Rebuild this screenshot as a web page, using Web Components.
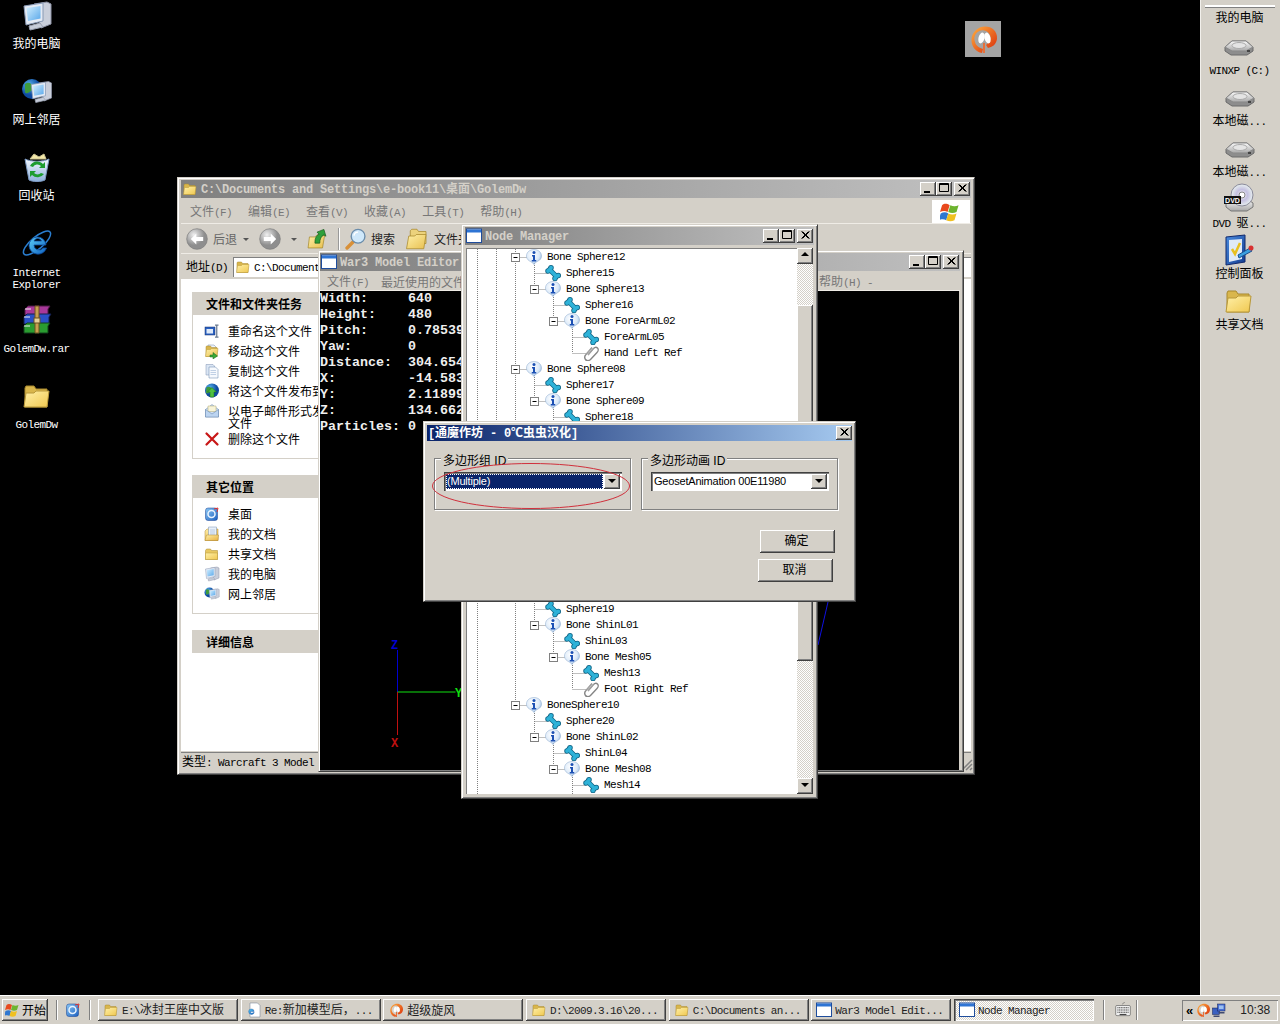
<!DOCTYPE html>
<html>
<head>
<meta charset="utf-8">
<title>Desktop</title>
<style>
html, body { margin: 0; background: #000; }
body { font: 12px/14px "Noto Sans CJK SC", "Liberation Sans", sans-serif; color: #000; overflow: hidden; }
</style>
</head>
<body>
<win-desktop>
  <desk-icons>
    <desk-icon icon="computer" label="我的电脑"></desk-icon>
    <desk-icon icon="network" label="网上邻居"></desk-icon>
    <desk-icon icon="recycle" label="回收站"></desk-icon>
    <desk-icon icon="ie" label="Internet|Explorer"></desk-icon>
    <desk-icon icon="rar" label="GolemDw.rar"></desk-icon>
    <desk-icon icon="folder" label="GolemDw"></desk-icon>
  </desk-icons>

  <desk-pin style="left:965px;top:21px"></desk-pin>

  <win-frame title="C:\Documents and Settings\e-book11\桌面\GolemDw" icon="folder" style="left:177px;top:177px;width:798px;height:598px">
    <menu-bar flag items="文件(F)|编辑(E)|查看(V)|收藏(A)|工具(T)|帮助(H)"></menu-bar>
    <ex-toolbar></ex-toolbar>
    <addr-bar value="C:\Documents and Settings"></addr-bar>
    <ex-sidebar>
      <task-box title="文件和文件夹任务" style="height:167px">
        <task-item icon="rename" label="重命名这个文件"></task-item>
        <task-item icon="move" label="移动这个文件"></task-item>
        <task-item icon="copy" label="复制这个文件"></task-item>
        <task-item icon="publish" label="将这个文件发布到"></task-item>
        <task-item icon="mail" label="以电子邮件形式发送|文件" tall></task-item>
        <task-item icon="del" label="删除这个文件"></task-item>
      </task-box>
      <task-box title="其它位置" style="height:139px">
        <task-item icon="desk" label="桌面"></task-item>
        <task-item icon="docs" label="我的文档"></task-item>
        <task-item icon="share" label="共享文档"></task-item>
        <task-item icon="computer" label="我的电脑"></task-item>
        <task-item icon="network" label="网上邻居"></task-item>
      </task-box>
      <task-box title="详细信息"></task-box>
    </ex-sidebar>
    <status-line text="类型: Warcraft 3 Model"></status-line>
  </win-frame>

  <win-frame thin title="War3 Model Editor" icon="win" style="left:318px;top:250px;width:646px;height:522px">
    <menu-bar style="height:19px;padding-left:7px;gap:12px" items="文件(F)|最近使用的文件|&gt;330|帮助(H) -"></menu-bar>
    <gl-view></gl-view>
  </win-frame>

  <win-frame title="Node Manager" icon="win" style="left:461px;top:224px;width:357px;height:575px">
    <node-tree>
      <tree-row lv="0" kind="bone" exp label="Bone Sphere12" pass="0,1"></tree-row>
      <tree-row lv="1" kind="mesh" label="Sphere15" pass="0,1,2"></tree-row>
      <tree-row lv="1" kind="bone" exp last label="Bone Sphere13" pass="0,1,2"></tree-row>
      <tree-row lv="2" kind="mesh" label="Sphere16" pass="0,1,2"></tree-row>
      <tree-row lv="2" kind="bone" exp last label="Bone ForeArmL02" pass="0,1,2"></tree-row>
      <tree-row lv="3" kind="mesh" label="ForeArmL05" pass="0,1,2"></tree-row>
      <tree-row lv="3" kind="att" last label="Hand Left Ref" pass="0,1,2"></tree-row>
      <tree-row lv="0" kind="bone" exp label="Bone Sphere08" pass="0,1"></tree-row>
      <tree-row lv="1" kind="mesh" label="Sphere17" pass="0,1,2"></tree-row>
      <tree-row lv="1" kind="bone" exp last label="Bone Sphere09" pass="0,1,2"></tree-row>
      <tree-row lv="2" kind="mesh" label="Sphere18" pass="0,1,2"></tree-row>
      <div style="height:176px"></div>
      <tree-row lv="1" kind="mesh" label="Sphere19" pass="0,2"></tree-row>
      <tree-row lv="1" kind="bone" exp last label="Bone ShinL01" pass="0,2"></tree-row>
      <tree-row lv="2" kind="mesh" label="ShinL03" pass="0,2"></tree-row>
      <tree-row lv="2" kind="bone" exp last label="Bone Mesh05" pass="0,2"></tree-row>
      <tree-row lv="3" kind="mesh" label="Mesh13" pass="0,2"></tree-row>
      <tree-row lv="3" kind="att" last label="Foot Right Ref" pass="0,2"></tree-row>
      <tree-row lv="0" kind="bone" exp last label="BoneSphere10" pass="0"></tree-row>
      <tree-row lv="1" kind="mesh" label="Sphere20" pass="0"></tree-row>
      <tree-row lv="1" kind="bone" exp last label="Bone ShinL02" pass="0"></tree-row>
      <tree-row lv="2" kind="mesh" label="ShinL04" pass="0"></tree-row>
      <tree-row lv="2" kind="bone" exp last label="Bone Mesh08" pass="0"></tree-row>
      <tree-row lv="3" kind="mesh" label="Mesh14" pass="0"></tree-row>
      <tree-row lv="3" kind="att" last label="" pass="0"></tree-row>
    </node-tree>
  </win-frame>

  <poly-dialog style="left:423px;top:421px;width:433px;height:181px"></poly-dialog>

  <desk-bar slot="bar">
    <bar-item icon="drive" label="WINXP (C:)"></bar-item>
    <bar-item icon="drive" label="本地磁..."></bar-item>
    <bar-item icon="drive" label="本地磁..."></bar-item>
    <bar-item icon="dvd" label="DVD 驱..."></bar-item>
    <bar-item icon="panel" label="控制面板"></bar-item>
    <bar-item icon="folder" label="共享文档"></bar-item>
  </desk-bar>

  <task-bar slot="task">
    <task-btn icon="folder" label="E:\冰封王座中文版"></task-btn>
    <task-btn icon="iedoc" label="Re:新加模型后，..."></task-btn>
    <task-btn icon="whirl" label="超级旋风"></task-btn>
    <task-btn icon="folder" label="D:\2009.3.16\20..."></task-btn>
    <task-btn icon="folder" label="C:\Documents an..."></task-btn>
    <task-btn icon="win" label="War3 Model Edit..."></task-btn>
    <task-btn icon="win" label="Node Manager" active></task-btn>
  </task-bar>
</win-desktop>

<script>
// icon artwork, all drawn on a 32 unit box
const G = (id, a, b, x2 = 0, y2 = 1) => `<linearGradient id="${id}" x1="0" y1="0" x2="${x2}" y2="${y2}"><stop offset="0" stop-color="${a}"/><stop offset="1" stop-color="${b}"/></linearGradient>`;
const monitor = `<path d="M13 4l13-2 4 2v20l-10 4z" fill="#c9ceda" stroke="#8d93a6"/><path d="M3 6l19-3v18L5 25z" fill="#e4eaf4" stroke="#8899b4"/><path d="M5.500 8l14-2v12.500L7 21z" fill="url(#scr)"/><path d="M8 26l11-3 3 4-13 3z" fill="#c6ccd8" stroke="#9aa1b2"/>`;
const folderArt = `<path d="M4 27V8l1-2h8l2 3h11v18z" fill="#d9b64c" stroke="#a8882c"/><path d="M3 27l2-14h8l2-2h13l-2 16z" fill="url(#fo)" stroke="#b8983a"/>`;
const IC = {
  computer: `<defs>${G('scr', '#d2efff', '#5aa8ea', 1, 1)}</defs>${monitor}`,
  network: `<defs>${G('scr', '#d2efff', '#5aa8ea', 1, 1)}<radialGradient id="gl" cx=".35" cy=".3"><stop offset="0" stop-color="#58b4f0"/><stop offset="1" stop-color="#0e4aa0"/></radialGradient></defs><circle cx="11" cy="13" r="10" fill="url(#gl)"/><path d="M4 8c4-3 6 0 8 1s0 5-2 6-5 4-6 1z" fill="#3f9b3c"/><g transform="translate(8 4) scale(.75)">${monitor}</g>`,
  recycle: `<defs>${G('bn', '#f2f7ff', '#8fb2dc')}</defs><path d="M9 7l4-5 5 3 5-3 2 5z" fill="#f4e8a8" stroke="#c9c090"/><path d="M4 7c6 3 18 3 24 0l-4 21c-4 2-12 2-16 0z" fill="url(#bn)" stroke="#7d9ac2"/><path d="M12 15a5 5 0 0 1 8-1l-2 2h6v-6l-2 2a8 8 0 0 0-13 2zM20 21a5 5 0 0 1-7 0l2-2H9v6l2-2a8 8 0 0 0 12-1z" fill="#1d9d30"/>`,
  ie: `<defs>${G('ie', '#5ed0f8', '#0c5ec0', 1, 1)}</defs><ellipse cx="16" cy="15" rx="17" ry="6" transform="rotate(-40 16 15)" fill="none" stroke="#2a7ed0" stroke-width="1.500"/><path d="M8 18a8.500 8.500 0 1 1 17-1H13a5 5 0 0 0 9 3h3.500a9 9 0 0 1-17.500-2zM13 13h7.500a4 4 0 0 0-7.500 0z" fill="url(#ie)" stroke="#0c4a9c" stroke-width=".8"/>`,
  rar: `<path d="M4 5l3-3h22l-2 3v6H4z" fill="#a8389a" stroke="#4a1a44"/><path d="M3 13l3-3h24l-2 3v7H3z" fill="#2a50c8" stroke="#14204e"/><path d="M3 22l3-3h23l-2 3v7H3z" fill="#2a9c30" stroke="#10401a"/><path d="M4 5h6M3 13h6M3 22h6" stroke="#eee"/><path d="M14 2h4v27h-4z" fill="#c8a050" stroke="#6a5020"/><rect x="13" y="14" width="6" height="5" fill="#e4d098" stroke="#6a5020"/>`,
  folder: `<defs>${G('fo', '#fff0a8', '#f0c850', 1, 1)}</defs>${folderArt}`,
  drive: `<defs>${G('dr', '#fafafa', '#a8a8a8', 0, 1)}</defs><path d="M2 17l7-6h14l7 6v4l-6 4H8l-6-4z" fill="#8d8d8d" stroke="#6a6a6a"/><path d="M2 17l7-6h14l7 6-7 4H9z" fill="url(#dr)" stroke="#8a8a8a"/><ellipse cx="16" cy="15.500" rx="7" ry="3" fill="#e4e4e4" stroke="#aaa"/><rect x="24" y="20" width="3" height="2" fill="#444"/>`,
  dvd: `<defs>${G('dr', '#fafafa', '#a8a8a8', 0, 1)}<radialGradient id="cd"><stop offset="0" stop-color="#fff"/><stop offset=".5" stop-color="#c4c0e0"/><stop offset="1" stop-color="#e8f0f0"/></radialGradient></defs><path d="M3 20l6-4h15l6 4v4l-6 4H8l-5-4z" fill="url(#dr)" stroke="#777"/><circle cx="19" cy="12" r="11" fill="url(#cd)" stroke="#8a8a9a"/><circle cx="19" cy="12" r="3" fill="#fff" stroke="#888"/><rect x="1" y="13" width="17" height="8" fill="#111"/><text x="9.500" y="19.500" font-size="7" font-weight="700" font-family="Liberation Sans" fill="#fff" text-anchor="middle">DVD</text>`,
  panel: `<defs>${G('pn', '#4a8ce0', '#123c90', 1, 1)}</defs><path d="M3 3l19-2v27L3 31z" fill="url(#pn)" stroke="#10286c"/><path d="M6 6l13-1v20L6 28z" fill="#dfeaf8"/><path d="M9 15l3 5 5-11" fill="none" stroke="#e8c020" stroke-width="2.500"/><path d="M15 21l12-7 2 3-13 7z" fill="#3aa0e0" stroke="#1a5090"/><circle cx="28" cy="14" r="2.500" fill="#d83030"/>`,
  rename: `<rect x="2" y="8" width="20" height="16" fill="#2a60c0" stroke="#143070"/><rect x="5" y="12" width="13" height="9" fill="#dfeaf8"/><path d="M22 4h7M25.500 4v24M22 28h7" stroke="#6a7a90" stroke-width="2.500" fill="none"/>`,
  move: `<defs>${G('fo', '#fff0a8', '#e8c050', 1, 1)}</defs><path d="M8 4h12l4 4v10H8z" fill="#eef4fc" stroke="#7088a8"/>${folderArt}<path d="M12 24h6v-5l9 7-9 6v-4h-6z" fill="#38a838" stroke="#1a6a1a"/>`,
  copy: `<path d="M4 3h14l3 3v18H4z" fill="#dbe6f4" stroke="#7c90b0"/><path d="M10 8h13l5 5v17H10z" fill="#f6f9fd" stroke="#6080a8"/><path d="M13 15h11M13 19h11M13 23h11" stroke="#8aa6cc"/>`,
  publish: `<defs><radialGradient id="gl" cx=".35" cy=".3"><stop offset="0" stop-color="#58b4f0"/><stop offset="1" stop-color="#0e4aa0"/></radialGradient></defs><circle cx="16" cy="15" r="14" fill="url(#gl)"/><path d="M5 9c5-4 8 0 11 1s0 7-3 8-8 5-9 1z" fill="#3f9b3c"/><path d="M16 9l9 9h-5v10h-8V18H7z" fill="#4ec040" stroke="#1a6a1a"/>`,
  mail: `<path d="M3 13L16 3l13 10v15H3z" fill="#cfe0f4" stroke="#6080a8"/><path d="M8 6h16v11H8z" fill="#f8f4d8" stroke="#b0a870"/><path d="M3 13l13 9 13-9v15H3z" fill="#bcd4f0" stroke="#6080a8"/>`,
  del: `<path d="M5 5l22 22M27 5L5 27" stroke="#c81818" stroke-width="4.500" stroke-linecap="round"/>`,
  desk: `<defs>${G('pn', '#8cc8f4', '#1c60c0', 1, 1)}</defs><rect x="3" y="4" width="24" height="25" rx="5" fill="url(#pn)" stroke="#123c90"/><circle cx="15" cy="16" r="7" fill="none" stroke="#eaf4ff" stroke-width="3"/><path d="M20 6l8-2-2 8" fill="none" stroke="#d83030" stroke-width="2"/>`,
  docs: `<defs>${G('fo', '#fff0a8', '#e8b040', 1, 1)}</defs><path d="M2 29V10l4-4h22v23z" fill="url(#fo)" stroke="#b08830"/><path d="M9 2h16v20H9z" fill="#e8f0fa" stroke="#7890b0"/><path d="M12 8h10M12 12h10M12 16h10" stroke="#8aa6cc"/><path d="M2 29l3-11h24l-1 11z" fill="url(#fo)" stroke="#b08830"/>`,
  share: `<defs>${G('fo', '#fff0a8', '#f0c850', 1, 1)}</defs><path d="M3 27V9l2-3h8l2 3h12v18z" fill="#e8c860" stroke="#a8882c"/><path d="M3 27V14h24v13z" fill="url(#fo)" stroke="#b8983a"/>`,
  win: `<rect x="1" y="2" width="30" height="27" fill="#fff" stroke="#1e4c9c" stroke-width="2"/><rect x="2" y="3" width="28" height="6" fill="#2e74d4"/>`,
  iedoc: `<defs>${G('ie', '#5ed0f8', '#0c5ec0', 1, 1)}</defs><path d="M8 2h15l5 5v23H8z" fill="#fff" stroke="#6a7a90"/><g transform="translate(0 8) scale(.65)"><path d="M8 18a8.500 8.500 0 1 1 17-1H13a5 5 0 0 0 9 3h3.500a9 9 0 0 1-17.500-2z" fill="url(#ie)" stroke="#0c4a9c"/></g>`,
  whirl: `<defs>${G('wh', '#ffb040', '#d82808', 1, 1)}</defs><path d="M15 30C4 28 1 14 9 7s22-3 21 9c-1 6-5 8-9 9l-2-3c6-4 6-11 0-14S5 11 8 19c1 4 5 6 8 7z" fill="url(#wh)"/><ellipse cx="14.500" cy="15" rx="3" ry="5.500" transform="rotate(15 14.500 15)" fill="#fff"/><ellipse cx="20.500" cy="15" rx="3" ry="5.500" transform="rotate(-15 20.500 15)" fill="#fff"/><path d="M17 20v10" stroke="#e8703a" stroke-width="2"/>`,
  bone: `<defs><radialGradient id="inf" cx=".4" cy=".35" r=".75"><stop offset="0" stop-color="#fff"/><stop offset=".6" stop-color="#dbe9f8"/><stop offset="1" stop-color="#7ea8d8"/></radialGradient></defs><path d="M16 31c-2-4-6-5-9-7C2 21 1 17 1 14 1 6 8 1 16 1s15 5 15 13c0 4-2 8-7 10-3 2-6 3-8 7z" fill="url(#inf)" stroke="#8aa8cc"/><circle cx="16" cy="7" r="3" fill="#1c50b4"/><path d="M12 12h6v10h2.500v3h-9v-3H14v-7h-2z" fill="#1c50b4"/>`,
  mesh: `<path d="M9 9l14 14" stroke="#0f6384" stroke-width="10" stroke-linecap="round"/><g fill="#0f6384"><circle cx="6" cy="12" r="5.500"/><circle cx="12" cy="5.500" r="5.500"/><circle cx="20" cy="27" r="5.500"/><circle cx="26.500" cy="21" r="5.500"/></g><path d="M9 9l14 14" stroke="#2eb2d8" stroke-width="7" stroke-linecap="round"/><g fill="#2eb2d8"><circle cx="6" cy="12" r="3.800"/><circle cx="12" cy="5.500" r="3.800"/><circle cx="20" cy="27" r="3.800"/><circle cx="26.500" cy="21" r="3.800"/></g>`,
  att: `<path d="M10 20L21 7c3-3 6-3 8-1s2 6-1 9L15 29c-3 3-8 3-10 0s-2-7 1-10L18 5" fill="none" stroke="#858585" stroke-width="2.800"/><path d="M10 20L21 7M6 19L18 5" stroke="#d8d8d8" stroke-width=".8"/>`,
  flag: `<path d="M3 6c4-3 7-2 11 0l-3 10c-3-2-7-2-11 0z" fill="#e8491d"/><path d="M15 6c4 2 8 2 12 0l-3 10c-4 2-8 2-12 0z" fill="#6db42f"/><path d="M0 18c4-2 8-2 11 0l-3 10c-3-2-7-2-11 0z" fill="#2f77d0" transform="translate(1 0)"/><path d="M12 18c4 2 8 2 12 0l-3 10c-4 2-8 2-12 0z" fill="#f0c020"/>`,
  back: `<defs><radialGradient id="ci" cx=".35" cy=".3"><stop offset="0" stop-color="#f0f0f0"/><stop offset="1" stop-color="#8e8e8e"/></radialGradient></defs><circle cx="16" cy="16" r="15" fill="url(#ci)" stroke="#7d7d7d"/><path d="M7 16l8-8v5h10v6H15v5z" fill="#fff"/>`,
  fwd: `<defs><radialGradient id="ci" cx=".35" cy=".3"><stop offset="0" stop-color="#f0f0f0"/><stop offset="1" stop-color="#8e8e8e"/></radialGradient></defs><circle cx="16" cy="16" r="15" fill="url(#ci)" stroke="#7d7d7d"/><path d="M25 16l-8-8v5H7v6h10v5z" fill="#fff"/>`,
  up: `<defs>${G('fo', '#fff0a8', '#e8c050', 1, 1)}</defs><path d="M3 29l2-16h8l3-3 11 1-3 18z" fill="url(#fo)" stroke="#a08428"/><path d="M13 22c0-8 2-11 6-13l-3-3 10-4 3 10-3-2c-4 2-6 6-6 12z" fill="#2fa03a" stroke="#145a1c"/>`,
  search: `<path d="M12 20L3 29" stroke="#d89038" stroke-width="5" stroke-linecap="round"/><circle cx="19" cy="12" r="10" fill="#cfe8fa" stroke="#6a8caa" stroke-width="2"/><path d="M13 11a6 6 0 0 1 6-5" stroke="#fff" stroke-width="2" fill="none"/>`,
  folders: `<defs>${G('fo', '#fff0a8', '#e8c050', 1, 1)}</defs><path d="M7 22V5l2-2h7l2 3h10v16z" fill="#ecd27c" stroke="#a8882c"/><path d="M2 29l3-17h8l2-2h13l-3 19z" fill="url(#fo)" stroke="#a8882c"/>`,
  kbd: `<path d="M15 6c0-3 4-2 4-4" stroke="#555" fill="none"/><rect x="3" y="8" width="26" height="18" rx="2" fill="#f0f0f0" stroke="#444"/><path d="M6 12h20M6 16h20M6 20h20" stroke="#444" stroke-width="2" stroke-dasharray="2 1"/><rect x="10" y="23" width="12" height="2" fill="#444"/>`,
  tray: `<rect x="3" y="12" width="14" height="13" fill="#3a60c0" stroke="#101e54"/><rect x="13" y="4" width="15" height="14" fill="#4a70d4" stroke="#101e54"/><rect x="16" y="7" width="9" height="7" fill="#9cc0f0"/><path d="M5 27h12v3H5zM15 20h12v3H15z" fill="#404a70"/>`
};

// latin runs are bitmap-font narrow next to the cjk ones
const esc = s => s.replace(/&/g, '&amp;').replace(/</g, '&lt;');
const mix = s => s.split(/([\u2E80-\uFFEF\u2103]+)/).filter(Boolean).map(p =>
  /[\u2E80-\uFFEF\u2103]/.test(p) ? `<span class="c">${esc(p)}</span>` : `<span class="l">${esc(p)}</span>`).join('');

class XT extends HTMLElement {
  connectedCallback() {
    if (this.shadowRoot) return;
    this.attachShadow({ mode: 'open' });
    const lines = (this.getAttribute('t') || '').split('|').map(mix).join('<br>');
    // no whitespace round the runs: the host is white-space: pre
    this.shadowRoot.innerHTML = `<style>
        :host { display: inline; white-space: pre; }
        .c { font-family: "Noto Sans CJK SC", sans-serif; font-size: var(--cjk-size, 12px); }
        .l { font-family: var(--lat-font, "Liberation Mono"), monospace; font-size: var(--lat-size, 11px); letter-spacing: var(--lat-ls, -0.6px); }
      </style>${lines}`;
  }
}
customElements.define('x-t', XT);

class XIcon extends HTMLElement {
  connectedCallback() {
    if (this.shadowRoot) return;
    this.attachShadow({ mode: 'open' });
    const s = this.getAttribute('size') || 16;
    this.shadowRoot.innerHTML = `
      <style>:host { display: block; flex: none; width: ${s}px; height: ${s}px; } svg { display: block; }</style>
      <svg width="${s}" height="${s}" viewBox="0 0 32 32">${IC[this.getAttribute('name')] || ''}</svg>`;
  }
}
customElements.define('x-icon', XIcon);

class WinDesktop extends HTMLElement {
  connectedCallback() {
    this.attachShadow({ mode: 'open' });
    this.shadowRoot.innerHTML = `
      <style>
        :host { display: flex; flex-direction: column; width: 1280px; height: 1024px; background: #000; overflow: hidden; }
        .main { flex: 1; min-height: 0; position: relative; display: flex; justify-content: space-between; }
      </style>
      <div class="main"><slot></slot><slot name="bar"></slot></div>
      <slot name="task"></slot>`;
  }
}
customElements.define('win-desktop', WinDesktop);

class DeskIcons extends HTMLElement {
  connectedCallback() {
    this.attachShadow({ mode: 'open' });
    this.shadowRoot.innerHTML = `
      <style>:host { display: flex; flex-direction: column; width: 73px; }</style><slot></slot>`;
  }
}
customElements.define('desk-icons', DeskIcons);

class DeskIcon extends HTMLElement {
  connectedCallback() {
    this.attachShadow({ mode: 'open' });
    const label = this.getAttribute('label');
    const latin = /^[\x00-\x7f]+$/.test(label);
    this.shadowRoot.innerHTML = `
      <style>
        :host { display: flex; flex-direction: column; align-items: center; height: 76px; color: #fff; text-align: center; font-family: "Liberation Mono", monospace; line-height: 12px; }
        x-icon { margin-bottom: ${latin ? 7 : 5}px; }
      </style>
      <x-icon name="${this.getAttribute('icon')}" size="32"></x-icon>
      <div><x-t t="${label}"></x-t></div>`;
  }
}
customElements.define('desk-icon', DeskIcon);

class DeskPin extends HTMLElement {
  connectedCallback() {
    this.attachShadow({ mode: 'open' });
    this.shadowRoot.innerHTML = `
      <style>
        :host { position: absolute; width: 36px; height: 36px; background: #a4a4a4; display: flex; align-items: center; justify-content: center; }
      </style>
      <x-icon name="whirl" size="32"></x-icon>`;
  }
}
customElements.define('desk-pin', DeskPin);

class WinFrame extends HTMLElement {
  connectedCallback() {
    this.attachShadow({ mode: 'open' });
    const thin = this.hasAttribute('thin');
    this.shadowRoot.innerHTML = `
      <style>
        :host { position: absolute; box-sizing: border-box; display: flex; flex-direction: column; background: #d4d0c8;
          border: 1px solid; border-color: #d4d0c8 #404040 #404040 #d4d0c8;
          box-shadow: inset 1px 1px #fff, inset -1px -1px #808080;
          padding: 2px 3px ${thin ? 1 : 3}px ${thin ? 1 : 3}px; }
        .bar { flex: none; height: 18px; margin-bottom: 1px; display: flex; align-items: center; gap: 2px; padding: 0 0 0 1px;
          background: linear-gradient(90deg, #808080, #c0c0c0); color: #d4d0c8; line-height: 14px;
          --lat-size: 12px; --lat-ls: -0.2px; font-weight: 700; overflow: hidden; white-space: nowrap; }
        .txt { flex: 1; margin-left: 1px; }
        .btns { display: flex; flex: none; margin-right: 1px; }
        .content { flex: 1; min-height: 0; display: flex; flex-direction: column; }
        win-btn[x] { margin-left: 2px; }
      </style>
      <div class="bar">
        <x-icon name="${this.getAttribute('icon')}" size="16"></x-icon>
        <div class="txt"><x-t t="${this.getAttribute('title')}"></x-t></div>
        <div class="btns"><win-btn g="min"></win-btn><win-btn g="max"></win-btn><win-btn g="x" x></win-btn></div>
      </div>
      <div class="content"><slot></slot></div>`;
    this.removeAttribute('title');
  }
}
customElements.define('win-frame', WinFrame);

const GLYPH = {
  min: '<path d="M3 9h6v2H3z" fill="#000"/>',
  max: '<path d="M2.500 1.500h9v8h-9zM2 2.500h10" fill="none" stroke="#000"/>',
  x: '<path d="M3.500 2.500l7 7M4.500 2.500l7 7M10.500 2.500l-7 7M11.500 2.500l-7 7" stroke="#000"/>',
  up: '<path d="M7 4l4 4H3z" fill="#000"/>',
  down: '<path d="M3 5h8L7 9z" fill="#000"/>'
};
class WinBtn extends HTMLElement {
  connectedCallback() {
    this.attachShadow({ mode: 'open' });
    this.shadowRoot.innerHTML = `
      <style>
        :host { display: block; flex: none; box-sizing: border-box; width: var(--bw, 16px); height: var(--bh, 14px); background: #d4d0c8;
          box-shadow: inset -1px -1px #404040, inset 1px 1px #fff, inset -2px -2px #808080; }
        svg { display: block; margin: 0 auto; }
      </style>
      <svg width="14" height="14" viewBox="0 0 14 14">${GLYPH[this.getAttribute('g')]}</svg>`;
  }
}
customElements.define('win-btn', WinBtn);

class MenuBar extends HTMLElement {
  connectedCallback() {
    this.attachShadow({ mode: 'open' });
    const items = this.getAttribute('items').split('|').map(t =>
      t[0] === '>' ? `<span style="width:${t.slice(1)}px"></span>` : `<span><x-t t="${t}"></x-t></span>`).join('');
    this.shadowRoot.innerHTML = `
      <style>
        :host { display: flex; flex: none; height: 25px; align-items: center; gap: 16px; padding-left: 9px; color: #777; position: relative;
          box-shadow: inset 0 -1px #efece6; }
        .flag { margin-left: auto; align-self: stretch; width: 38px; margin: 1px 1px 1px auto; background: #fff; display: flex; align-items: center; justify-content: center; }
      </style>
      ${items}
      ${this.hasAttribute('flag') ? '<div class="flag"><x-icon name="flag" size="22"></x-icon></div>' : ''}`;
  }
}
customElements.define('menu-bar', MenuBar);

class ExToolbar extends HTMLElement {
  connectedCallback() {
    this.attachShadow({ mode: 'open' });
    this.shadowRoot.innerHTML = `
      <style>
        :host { display: flex; flex: none; height: 30px; align-items: center; padding-left: 5px; color: #222; box-shadow: inset 0 -1px #efece6; }
        .g { color: #666; margin: 0 6px 0 5px; }
        .tri { width: 0; height: 0; border: 3px solid transparent; border-top: 3px solid #555; border-bottom: 0; margin: 0 10px 0 0; }
        .sep { width: 1px; height: 22px; background: #999; box-shadow: 1px 0 #fff; margin: 0 6px 0 10px; }
      </style>
      <x-icon name="back" size="22"></x-icon><span class="g"><x-t t="后退"></x-t></span><i class="tri"></i>
      <x-icon name="fwd" size="22"></x-icon><i class="tri" style="margin-left:10px;margin-right:9px"></i>
      <x-icon name="up" size="22"></x-icon><i class="sep"></i>
      <x-icon name="search" size="22"></x-icon><span style="margin:0 10px 0 4px"><x-t t="搜索"></x-t></span>
      <x-icon name="folders" size="24"></x-icon><span style="margin-left:5px"><x-t t="文件夹"></x-t></span>`;
  }
}
customElements.define('ex-toolbar', ExToolbar);

class AddrBar extends HTMLElement {
  connectedCallback() {
    this.attachShadow({ mode: 'open' });
    this.shadowRoot.innerHTML = `
      <style>
        :host { display: flex; flex: none; height: 25px; align-items: center; padding-left: 5px; }
        .f { flex: 1; height: 20px; margin-left: 5px; background: #fff; box-shadow: inset 1px 1px #808080; display: flex; align-items: center; gap: 3px; padding-left: 2px; white-space: nowrap; overflow: hidden; }
      </style>
      <span><x-t t="地址(D)"></x-t></span>
      <div class="f"><x-icon name="folder" size="16"></x-icon><x-t t="${this.getAttribute('value')}"></x-t></div>`;
  }
}
customElements.define('addr-bar', AddrBar);

class ExSidebar extends HTMLElement {
  connectedCallback() {
    this.attachShadow({ mode: 'open' });
    this.shadowRoot.innerHTML = `
      <style>:host { flex: 1; min-height: 0; display: flex; flex-direction: column; gap: 16px; background: #fff; padding: 13px 0 0 11px; overflow: hidden; }</style>
      <slot></slot>`;
  }
}
customElements.define('ex-sidebar', ExSidebar);

class TaskBox extends HTMLElement {
  connectedCallback() {
    this.attachShadow({ mode: 'open' });
    const t = this.getAttribute('title');
    this.removeAttribute('title');
    this.shadowRoot.innerHTML = `
      <style>
        :host { display: block; flex: none; width: 190px; box-sizing: border-box; }
        .h { height: 23px; background: #d4d0c8; display: flex; align-items: center; padding-left: 14px; font-weight: 700; }
        .b { box-sizing: border-box; height: calc(100% - 23px); padding: 8px 0 0 11px; border: 1px solid #d4d0c8; border-top: 0; display: flex; flex-direction: column; }
      </style>
      <div class="h"><x-t t="${t}"></x-t></div>
      ${this.children.length ? '<div class="b"><slot></slot></div>' : ''}`;
  }
}
customElements.define('task-box', TaskBox);

class TaskItem extends HTMLElement {
  connectedCallback() {
    this.attachShadow({ mode: 'open' });
    const tall = this.hasAttribute('tall');
    this.shadowRoot.innerHTML = `
      <style>
        :host { display: flex; flex: none; height: ${tall ? 28 : 20}px; align-items: flex-start; gap: 8px; line-height: 12px; white-space: nowrap; }
        div { padding-top: 2px; }
      </style>
      <x-icon name="${this.getAttribute('icon')}" size="16"></x-icon>
      <div><x-t t="${this.getAttribute('label')}"></x-t></div>`;
  }
}
customElements.define('task-item', TaskItem);

class StatusLine extends HTMLElement {
  connectedCallback() {
    this.attachShadow({ mode: 'open' });
    this.shadowRoot.innerHTML = `
      <style>
        :host { display: flex; flex: none; height: 19px; align-items: center; padding-left: 1px; margin-top: 1px; box-shadow: inset 0 1px #808080; position: relative; }
        .grip { position: absolute; right: -2px; bottom: 0; }
      </style>
      <x-t t="${this.getAttribute('text')}"></x-t>
      <svg class="grip" width="12" height="12" viewBox="0 0 12 12"><path d="M11 1L1 11M11 5l-6 6M11 9l-2 2" stroke="#808080" stroke-width="1.500"/></svg>`;
  }
}
customElements.define('status-line', StatusLine);

class GlView extends HTMLElement {
  connectedCallback() {
    this.attachShadow({ mode: 'open' });
    const stats = [['Width:', '640'], ['Height:', '480'], ['Pitch:', '0.78539'], ['Yaw:', '0'], ['Distance:', '304.654'],
      ['X:', '-14.583'], ['Y:', '2.11899'], ['Z:', '134.662'], ['Particles:', '0']];
    this.shadowRoot.innerHTML = `
      <style>
        :host { flex: 1; min-height: 0; display: block; position: relative; background: #000; overflow: hidden; margin-right: 1px; }
        .stats { color: #efefef; font: 700 13.330px/16px "Liberation Mono", monospace; display: grid; grid-template-columns: 88px auto; justify-content: start; }
        svg { position: absolute; left: 0; top: 0; }
        text { font: 700 12px "Liberation Mono", monospace; }
      </style>
      <div class="stats">${stats.map(r => `<span>${r[0]}</span><span>${r[1]}</span>`).join('')}</div>
      <svg width="640" height="480" viewBox="320 291 640 480">
        <path d="M397.500 650v42" stroke="#0000d0"/><path d="M397.500 692h58" stroke="#10e010"/><path d="M397.500 692v43" stroke="#c01010"/>
        <path d="M828 602l-10 43" stroke="#1010e0"/>
        <text x="391" y="649" fill="#0000d0">Z</text><text x="455" y="697" fill="#10e010">Y</text><text x="391" y="747" fill="#c01010">X</text>
      </svg>`;
  }
}
customElements.define('gl-view', GlView);

class NodeTree extends HTMLElement {
  connectedCallback() {
    this.attachShadow({ mode: 'open' });
    this.shadowRoot.innerHTML = `
      <style>
        :host { flex: 1; min-height: 0; display: flex; background: #fff; margin: 2px 1px 1px 1px; overflow: hidden; box-shadow: inset 1px 1px #808080; }
        .rows { flex: 1; min-width: 0; padding-top: 1px; overflow: hidden; }
        .sb { flex: none; width: 16px; display: flex; flex-direction: column;
          background: repeating-conic-gradient(#d4d0c8 0 25%, #fff 0 50%) 0 0 / 2px 2px; }
        .th { background: #d4d0c8; box-shadow: inset -1px -1px #404040, inset 1px 1px #fff, inset -2px -2px #808080; height: 356px; margin: 41px 0 auto; }
        win-btn { --bh: 16px; }
      </style>
      <div class="rows"><slot></slot></div>
      <div class="sb"><win-btn g="up"></win-btn><div class="th"></div><win-btn g="down"></win-btn></div>`;
  }
}
customElements.define('node-tree', NodeTree);

const col = n => 11 + 19 * n + .5;
class TreeRow extends HTMLElement {
  connectedCallback() {
    this.attachShadow({ mode: 'open' });
    const lv = +this.getAttribute('lv');
    const own = 2 + lv;
    const x = col(own), ix = col(own + 1);
    const exp = this.hasAttribute('exp'), last = this.hasAttribute('last');
    const dots = 'stroke="#808080" stroke-dasharray="1 1"';
    let art = (this.getAttribute('pass') || '').split(',').filter(p => p !== '' && +p < own)
      .map(p => `<path d="M${col(+p)} 0v16" ${dots}/>`).join('');
    art += `<path d="M${x} 0v${last ? 8 : 16}" ${dots}/><path d="M${x} 8.500H${ix - 6}" ${dots}/>`;
    if (exp) {
      art += `<path d="M${ix} 8v8" ${dots}/>`;
      art += `<rect x="${x - 4}" y="4.500" width="8" height="8" fill="#fff" stroke="#808080"/><path d="M${x - 2} 8.500h4" stroke="#000"/>`;
    }
    const name = this.getAttribute('kind');
    art += `<g transform="translate(${ix - 8.5} 0) scale(.5)">${IC[name]}</g>`;
    const w = 81 + 19 * lv;
    this.shadowRoot.innerHTML = `
      <style>
        :host { display: flex; height: 16px; align-items: center; white-space: nowrap; }
        svg { display: block; flex: none; }
        span { font: 11px/16px "Liberation Mono", monospace; letter-spacing: -0.6px; }
      </style>
      <svg width="${w}" height="16" viewBox="0 0 ${w} 16">${art}</svg>
      <span>${esc(this.getAttribute('label'))}</span>`;
  }
}
customElements.define('tree-row', TreeRow);

class GroupBox extends HTMLElement {
  connectedCallback() {
    this.attachShadow({ mode: 'open' });
    this.shadowRoot.innerHTML = `
      <style>
        :host { display: block; position: relative; box-sizing: border-box; width: 197px; height: 52px; border: 1px solid #808080; box-shadow: inset 1px 1px #fff, 1px 1px #fff;
          padding: 13px 8px 0 9px; --lat-font: "Liberation Sans"; --lat-size: 12px; --lat-ls: 0; }
        .lg { position: absolute; left: 6px; top: -6px; background: #d4d0c8; padding: 0 2px; line-height: 13px; white-space: nowrap; }
      </style>
      <div class="lg"><x-t t="${this.getAttribute('label')}"></x-t></div>
      <slot></slot>`;
  }
}
customElements.define('group-box', GroupBox);

class ComboBox extends HTMLElement {
  connectedCallback() {
    this.attachShadow({ mode: 'open' });
    const sel = this.hasAttribute('selected');
    this.shadowRoot.innerHTML = `
      <style>
        :host { display: flex; align-items: center; box-sizing: border-box; height: 19px; width: 178px; background: #fff; padding: 2px;
          box-shadow: inset 1px 1px #404040, inset 2px 2px #808080, inset -1px -1px #fff; }
        .v { flex: 1; height: 15px; font: 11px/15px "Liberation Sans", sans-serif; letter-spacing: -0.2px; padding-left: 1px; white-space: nowrap; overflow: hidden; }
        .v.s { background: #0a246a; color: #fff; outline: 1px dotted #fff; outline-offset: -1px; }
        win-btn { --bw: 16px; --bh: 15px; margin-left: 1px; }
      </style>
      <div class="v ${sel ? 's' : ''}">${this.getAttribute('value')}</div>
      <win-btn g="down"></win-btn>`;
  }
}
customElements.define('combo-box', ComboBox);

class PushBtn extends HTMLElement {
  connectedCallback() {
    this.attachShadow({ mode: 'open' });
    this.shadowRoot.innerHTML = `
      <style>
        :host { display: flex; align-items: center; justify-content: center; box-sizing: border-box; padding: 0 2px 3px 0; width: 75px; height: 23px; background: #d4d0c8;
          box-shadow: inset -1px -1px #404040, inset 1px 1px #fff, inset -2px -2px #808080; }
      </style>
      <slot></slot>`;
  }
}
customElements.define('push-btn', PushBtn);

class PolyDialog extends HTMLElement {
  connectedCallback() {
    this.attachShadow({ mode: 'open' });
    this.shadowRoot.innerHTML = `
      <style>
        :host { position: absolute; box-sizing: border-box; display: flex; flex-direction: column; background: #d4d0c8;
          border: 1px solid; border-color: #d4d0c8 #404040 #404040 #d4d0c8; box-shadow: inset 1px 1px #fff, inset -1px -1px #808080; padding: 3px 3px 3px 3px; }
        .t { flex: none; height: 16px; display: flex; align-items: center; justify-content: space-between; padding: 0 0 0 1px; line-height: 14px;
          background: linear-gradient(90deg, #0a246a, #a6caf0); color: #fff; font-weight: 700; --lat-size: 12px; --lat-ls: -0.2px; white-space: nowrap; }
        .groups { display: flex; gap: 10px; margin: 17px 0 0 7px; }
        .btns { display: flex; flex-direction: column; align-items: flex-end; gap: 6px; margin: 20px 17px 0 0; }
        .btns push-btn + push-btn { margin-right: 2px; }
        .ring { position: absolute; left: 7px; top: 40px; pointer-events: none; }
      </style>
      <div class="t"><span><x-t t="[通魔作坊 - 0℃虫虫汉化]"></x-t></span><win-btn g="x"></win-btn></div>
      <div class="groups">
        <group-box label="多边形组 ID"><combo-box selected value="(Multiple)"></combo-box></group-box>
        <group-box label="多边形动画 ID"><combo-box value="GeosetAnimation 00E11980"></combo-box></group-box>
      </div>
      <div class="btns">
        <push-btn><x-t t="确定"></x-t></push-btn>
        <push-btn><x-t t="取消"></x-t></push-btn>
      </div>
      <svg class="ring" width="202" height="50" viewBox="0 0 202 50"><ellipse cx="100" cy="24" rx="98.500" ry="22.500" fill="none" stroke="#d0303c"/></svg>`;
  }
}
customElements.define('poly-dialog', PolyDialog);

class DeskBar extends HTMLElement {
  connectedCallback() {
    this.attachShadow({ mode: 'open' });
    this.shadowRoot.innerHTML = `
      <style>
        :host { display: flex; flex-direction: column; align-items: center; box-sizing: border-box; width: 80px; padding-right: 2px; background: #d4d0c8; border-left: 1px solid #f2f0ec; position: relative; }
        .grip { align-self: stretch; height: 2px; margin: 5px 3px 0 4px; background: #fff; box-shadow: 0 1px #808080; }
        .h { margin: 3px 0 6px; line-height: 14px; }
      </style>
      <div class="grip"></div>
      <div class="h"><x-t t="我的电脑"></x-t></div>
      <slot></slot>`;
  }
}
customElements.define('desk-bar', DeskBar);

class BarItem extends HTMLElement {
  connectedCallback() {
    this.attachShadow({ mode: 'open' });
    this.shadowRoot.innerHTML = `
      <style>
        :host { display: flex; flex-direction: column; align-items: center; flex: none; height: 51px; line-height: 12px; white-space: nowrap; }
        x-icon { margin-bottom: 1px; }
      </style>
      <x-icon name="${this.getAttribute('icon')}" size="32"></x-icon>
      <div><x-t t="${this.getAttribute('label')}"></x-t></div>`;
  }
}
customElements.define('bar-item', BarItem);

class TaskBar extends HTMLElement {
  connectedCallback() {
    this.attachShadow({ mode: 'open' });
    this.shadowRoot.innerHTML = `
      <style>
        :host { display: flex; flex: none; height: 29px; box-sizing: border-box; align-items: center; background: #d4d0c8; box-shadow: inset 0 1px #fff; padding: 3px 2px 2px; position: relative; }
        .start { width: 46px; height: 22px; display: flex; align-items: center; gap: 1px; padding-left: 3px; box-sizing: border-box;
          box-shadow: inset -1px -1px #404040, inset 1px 1px #fff, inset -2px -2px #808080; }
        .sep { width: 2px; height: 20px; margin: 0 7px 0 6px; background: #fff; box-shadow: inset 1px 0 #808080; flex: none; }
        .tasks { display: flex; gap: 2.670px; }
        .tray { margin-left: auto; width: 96px; height: 21px; box-sizing: border-box; display: flex; align-items: center; gap: 0; padding-left: 4px; box-shadow: inset 1px 1px #808080, inset -1px -1px #fff; }
        .tray b { font: 700 13px "Liberation Sans", sans-serif; margin-right: 2px; }
        .time { margin-left: 13px; font: 12px "Liberation Sans", sans-serif; color: #222; }
      </style>
      <div class="start"><x-icon name="flag" size="16"></x-icon><x-t t="开始"></x-t></div>
      <i class="sep" style="margin-left:8px;margin-right:6px"></i>
      <x-icon name="desk" size="16" style="margin-left:1px"></x-icon>
      <i class="sep" style="margin-left:8px"></i>
      <div class="tasks"><slot></slot></div>
      <i class="sep" style="margin-left:9px;margin-right:6px"></i>
      <x-icon name="kbd" size="18" style="margin-left:3px"></x-icon>
      <i class="sep" style="margin-left:4px"></i>
      <div class="tray"><b>«</b><x-icon name="whirl" size="16"></x-icon><x-icon name="tray" size="16"></x-icon><span class="time">10:38</span></div>`;
  }
}
customElements.define('task-bar', TaskBar);

class TaskBtn extends HTMLElement {
  connectedCallback() {
    this.attachShadow({ mode: 'open' });
    this.shadowRoot.innerHTML = `
      <style>
        :host { display: flex; align-items: center; gap: 3px; box-sizing: border-box; width: 140px; height: 22px; padding-left: 5px; white-space: nowrap; overflow: hidden; color: #222;
          box-shadow: inset -1px -1px #404040, inset 1px 1px #fff, inset -2px -2px #808080; }
        :host([active]) { box-shadow: inset 1px 1px #404040, inset 2px 2px #808080, inset -1px -1px #fff;
          background: repeating-conic-gradient(#d4d0c8 0 25%, #fff 0 50%) 0 0 / 2px 2px; }
      </style>
      <x-icon name="${this.getAttribute('icon')}" size="16"></x-icon>
      <x-t t="${this.getAttribute('label')}"></x-t>`;
  }
}
customElements.define('task-btn', TaskBtn);
</script>
</body>
</html>
